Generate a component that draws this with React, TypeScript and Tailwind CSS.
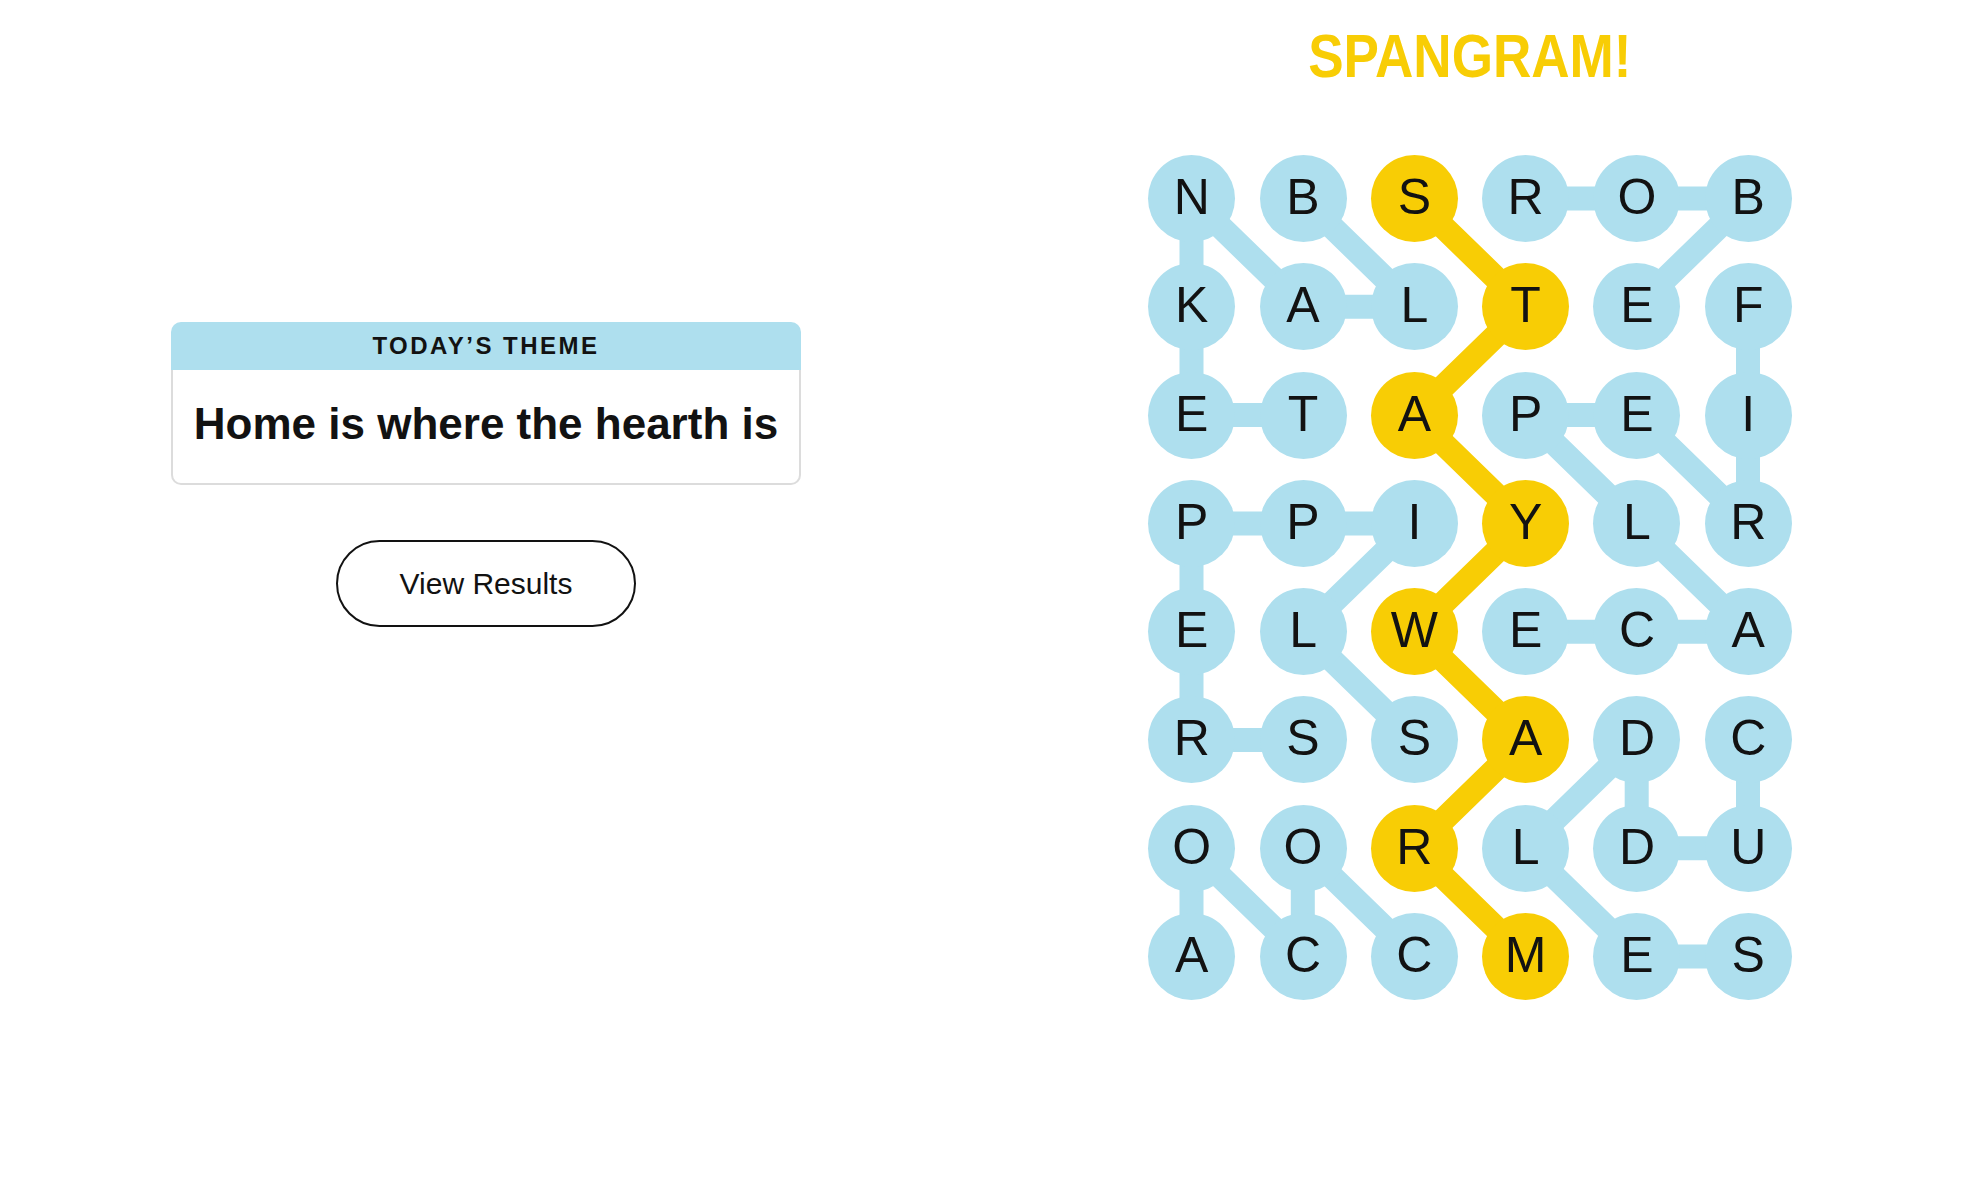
const GRID = ["NBSROB", "KALTEF", "ETAPEI", "PPIYLR", "ELWECA", "RSSADC", "OORLDU", "ACCMES"]

type Cell = [number, number]

const SPANGRAM: Cell[] = [
  [0, 2],
  [1, 3],
  [2, 2],
  [3, 3],
  [4, 2],
  [5, 3],
  [6, 2],
  [7, 3],
]

// found theme words, as paths of [row, col]
const WORDS: Cell[][] = [
  [[0, 1], [1, 2], [1, 1], [0, 0], [1, 0], [2, 0], [2, 1]], // BLANKET
  [[0, 3], [0, 4], [0, 5], [1, 4]], // ROBE
  [[1, 5], [2, 5], [3, 5], [2, 4], [2, 3], [3, 4], [4, 5], [4, 4], [4, 3]], // FIREPLACE
  [[5, 2], [4, 1], [3, 2], [3, 1], [3, 0], [4, 0], [5, 0], [5, 1]], // SLIPPERS
  [[5, 5], [6, 5], [6, 4], [5, 4], [6, 3], [7, 4], [7, 5]], // CUDDLES
  [[7, 2], [6, 1], [7, 1], [6, 0], [7, 0]], // COCOA
]

const BLUE = "#aedfee"
const YELLOW = "#f8cd05"
const SIZE = 87
const STEP_X = 111.3
const STEP_Y = 108.3
const BOARD_W = SIZE + STEP_X * 5
const BOARD_H = SIZE + STEP_Y * 7

const center = ([r, c]: Cell) => ({ x: SIZE / 2 + c * STEP_X, y: SIZE / 2 + r * STEP_Y })

const isSpangram = (r: number, c: number) => SPANGRAM.some(([sr, sc]) => sr === r && sc === c)

const Path = ({ cells, color }: { cells: Cell[]; color: string }) => (
  <polyline
    points={cells.map(cell => `${center(cell).x},${center(cell).y}`).join(" ")}
    fill="none"
    stroke={color}
    strokeWidth={24}
    strokeLinejoin="round"
  />
)

const Board = () => {
  return (
    <div className="relative">
      <svg
        className="absolute inset-0"
        width={BOARD_W}
        height={BOARD_H}
        viewBox={`0 0 ${BOARD_W} ${BOARD_H}`}>
        {WORDS.map((word, i) => (
          <Path key={i} cells={word} color={BLUE} />
        ))}
        <Path cells={SPANGRAM} color={YELLOW} />
      </svg>
      <div className="relative grid grid-cols-[repeat(6,87px)] gap-x-[24.3px] gap-y-[21.3px]">
        {GRID.map((row, r) =>
          row.split("").map((letter, c) => (
            <div
              key={`${r}-${c}`}
              className={`flex h-[87px] w-[87px] items-center justify-center rounded-full pb-[3px] text-[50px] leading-none text-[#121212] ${
                isSpangram(r, c) ? "bg-[#f8cd05]" : "bg-[#aedfee]"
              }`}>
              {letter}
            </div>
          ))
        )}
      </div>
    </div>
  )
}

export default function App() {
  return (
    <div className="flex min-h-[1188px] w-full bg-white font-['Liberation_Sans',Arial,sans-serif] text-[#121212]">
      <div className="flex w-[972px] flex-col items-center pt-[322px]">
        <div className="w-[630px]">
          <div className="flex h-[48px] items-center justify-center rounded-t-[10px] bg-[#aedfee]">
            <span className="text-[24px] font-bold tracking-[2.5px] uppercase">Today’s Theme</span>
          </div>
          <div className="flex h-[115px] items-center justify-center rounded-b-[10px] border-2 border-t-0 border-[#dcdcdc] pb-[6px]">
            <h1 className="text-[44px] font-bold">Home is where the hearth is</h1>
          </div>
        </div>
        <button className="mt-[55px] flex h-[87px] w-[300px] items-center justify-center rounded-full border-2 border-[#121212] text-[30px]">
          View Results
        </button>
      </div>
      <div className="flex flex-1 flex-col items-center pr-[4px] pt-[26px]">
        <h2 className="scale-x-[0.87] text-[61px] leading-none font-bold text-[#f8cd05]">SPANGRAM!</h2>
        <div className="mt-[68px]">
          <Board />
        </div>
      </div>
    </div>
  )
}
